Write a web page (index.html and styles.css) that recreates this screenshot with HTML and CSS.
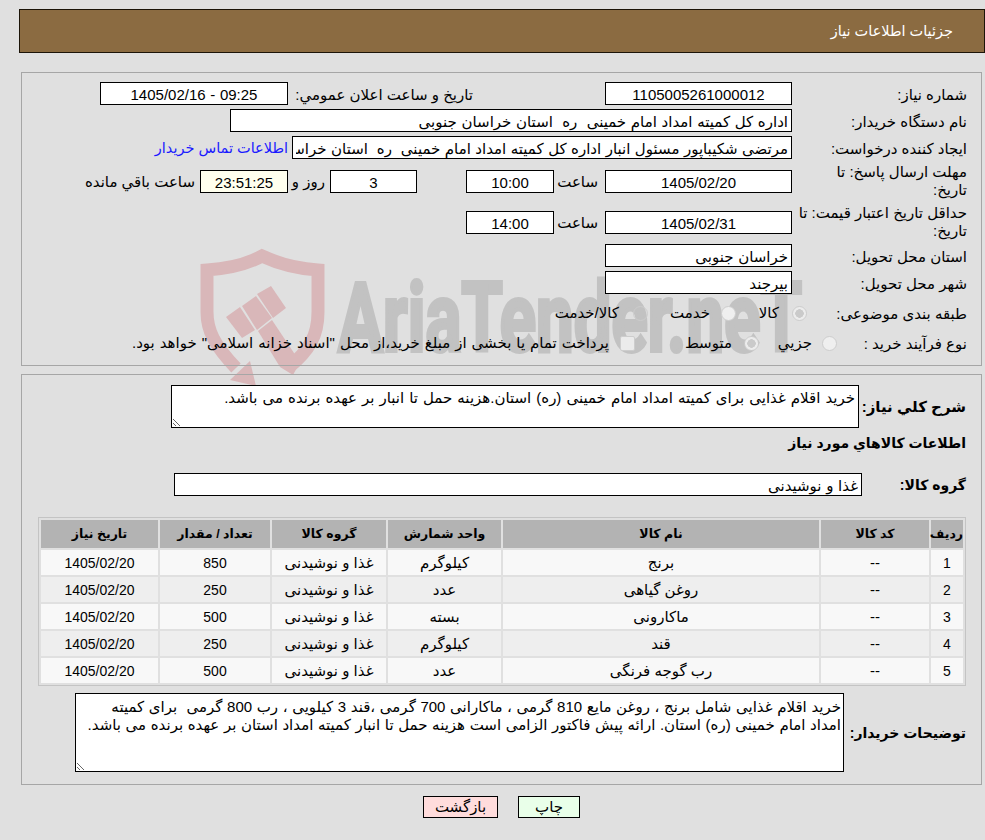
FILE: index.html
```html
<!DOCTYPE html>
<html lang="fa" dir="rtl">
<head>
<meta charset="utf-8">
<title>جزئیات اطلاعات نیاز</title>
<link rel="stylesheet" href="styles.css">
</head>
<body>
<svg class="watermark" viewBox="190 240 620 160" width="620" height="160">
  <path class="wm-shield" d="M236 368 C214 345 207 330 207 312 L207 270 Q240 268 262 256 Q288 268 318 270 L318 312 C318 335 310 350 288 368"/>
  <path class="wm-red" d="M250 361 L230 380 L256 386 Z"/>
  <path class="wm-red" d="M226 317 L240 307 L255 330 L242 338 Z"/>
  <path class="wm-red" d="M242 306 L256 296 L272 318 L257 330 Z"/>
  <path class="wm-red" d="M257 294 L271 286 L286 308 L273 318 Z"/>
  <path class="wm-red" d="M258 331 L272 320 L300 362 L293 375 L280 367 Z"/>
  <text class="wm-text" x="338" y="351" textLength="464" lengthAdjust="spacingAndGlyphs">AriaTender.neT</text>
</svg>

<header class="page-title">جزئیات اطلاعات نیاز</header>

<section class="panel panel-info">
  <div class="row">
    <label class="lbl">شماره نیاز:</label>
    <input class="field w-main ctr" readonly value="1105005261000012">
    <label class="lbl-announce">تاریخ و ساعت اعلان عمومي:</label>
    <input class="field w-date ctr" readonly value="1405/02/16 - 09:25" dir="ltr">
  </div>
  <div class="row">
    <label class="lbl">نام دستگاه خریدار:</label>
    <input class="field w-buyer" readonly value="اداره کل کمیته امداد امام خمینی  ره  استان خراسان جنوبی">
  </div>
  <div class="row">
    <label class="lbl">ایجاد کننده درخواست:</label>
    <input class="field w-creator" readonly value="مرتضی شکیباپور مسئول انبار اداره کل کمیته امداد امام خمینی  ره  استان خراسان جنوبی">
    <a class="contact" href="#">اطلاعات تماس خریدار</a>
  </div>
  <div class="row row-tall row-first-tall">
    <label class="lbl lbl-tall lbl-narrow">مهلت ارسال پاسخ: تا تاریخ:</label>
    <input class="field w-main ctr" readonly value="1405/02/20">
    <span class="unit">ساعت</span>
    <input class="field w-small ctr" readonly value="10:00">
    <input class="field w-days ctr" readonly value="3">
    <span class="days-and">روز و</span>
    <input class="field w-small ctr timer" readonly value="23:51:25">
    <span class="remain">ساعت باقي مانده</span>
  </div>
  <div class="row row-tall">
    <label class="lbl lbl-tall">حداقل تاریخ اعتبار قیمت: تا تاریخ:</label>
    <input class="field w-main ctr" readonly value="1405/02/31">
    <span class="unit">ساعت</span>
    <input class="field w-small ctr" readonly value="14:00">
  </div>
  <div class="row">
    <label class="lbl">استان محل تحویل:</label>
    <input class="field w-main" readonly value="خراسان جنوبی">
  </div>
  <div class="row">
    <label class="lbl">شهر محل تحویل:</label>
    <input class="field w-main" readonly value="بیرجند">
  </div>
  <div class="row row-options row-subject">
    <label class="lbl">طبقه بندی موضوعی:</label>
    <span class="radio checked opt-a"></span><span class="opt-text t-kala">کالا</span>
    <span class="radio pale"></span><span class="opt-text t-khedmat">خدمت</span>
    <span class="radio hollow"></span><span class="opt-text t-both">کالا/خدمت</span>
  </div>
  <div class="row row-options">
    <label class="lbl">نوع فرآیند خرید :</label>
    <span class="radio pale opt-b"></span><span class="opt-text t-jozei">جزیي</span>
    <span class="radio checked"></span><span class="opt-text t-motavaset">متوسط</span>
    <span class="check"></span><span class="opt-text t-long">پرداخت تمام یا بخشی از مبلغ خرید،از محل "اسناد خزانه اسلامی" خواهد بود.</span>
  </div>
</section>

<section class="panel panel-goods">
  <div class="row-need">
    <label class="lbl-bold need-l">شرح کلي نیاز:</label>
    <textarea class="area area-need" readonly>خرید اقلام غذایی برای کمیته امداد امام خمینی (ره) استان.هزینه حمل تا انبار بر عهده برنده می باشد.</textarea>
  </div>
  <h2 class="goods-title">اطلاعات کالاهاي مورد نیاز</h2>
  <div class="row-group">
    <label class="lbl-bold group-l">گروه کالا:</label>
    <input class="field w-group" readonly value="غذا و نوشیدنی">
  </div>
  <table class="goods">
    <colgroup>
      <col class="c1"><col class="c2"><col class="c3"><col class="c4"><col class="c5"><col class="c6"><col class="c7">
    </colgroup>
    <thead>
      <tr><th>ردیف</th><th>کد کالا</th><th>نام کالا</th><th>واحد شمارش</th><th>گروه کالا</th><th>تعداد / مقدار</th><th>تاریخ نیاز</th></tr>
    </thead>
    <tbody>
      <tr><td class="num">1</td><td>--</td><td>برنج</td><td>کیلوگرم</td><td>غذا و نوشیدنی</td><td class="num">850</td><td class="num">1405/02/20</td></tr>
      <tr><td class="num">2</td><td>--</td><td>روغن گیاهی</td><td>عدد</td><td>غذا و نوشیدنی</td><td class="num">250</td><td class="num">1405/02/20</td></tr>
      <tr><td class="num">3</td><td>--</td><td>ماکارونی</td><td>بسته</td><td>غذا و نوشیدنی</td><td class="num">500</td><td class="num">1405/02/20</td></tr>
      <tr><td class="num">4</td><td>--</td><td>قند</td><td>کیلوگرم</td><td>غذا و نوشیدنی</td><td class="num">250</td><td class="num">1405/02/20</td></tr>
      <tr><td class="num">5</td><td>--</td><td>رب گوجه فرنگی</td><td>عدد</td><td>غذا و نوشیدنی</td><td class="num">500</td><td class="num">1405/02/20</td></tr>
    </tbody>
  </table>
  <div class="row-notes">
    <label class="lbl-bold notes-l">توضیحات خریدار:</label>
    <textarea class="area area-notes" readonly>خرید اقلام غذایی شامل برنج ، روغن مایع 810 گرمی ، ماکارانی 700 گرمی ،قند 3 کیلویی ، رب 800 گرمی  برای کمیته
امداد امام خمینی (ره) استان. ارائه پیش فاکتور الزامی است هزینه حمل تا انبار کمیته امداد استان بر عهده برنده می باشد.</textarea>
  </div>
</section>

<div class="actions">
  <button class="btn btn-print" type="button">چاپ</button>
  <button class="btn btn-back" type="button">بازگشت</button>
</div>
</body>
</html>
```

FILE: styles.css
```css
* { box-sizing: border-box; }
html, body { height: 100%; }
body {
  margin: 0;
  padding: 9px 0 0;
  position: relative;
  overflow: hidden;
  background: #e0e0e0;
  color: #000;
  font: 15px/18px "Liberation Sans", "DejaVu Sans", sans-serif;
}
.watermark { position: absolute; left: 190px; top: 240px; }
.wm-shield { fill: none; stroke: #d9b7b9; stroke-width: 13; }
.wm-red { fill: #d9b7b9; }
.wm-text {
  fill: #c2c2c2;
  stroke: #c2c2c2;
  stroke-width: 4;
  font: 700 97px Roboto, sans-serif;
  direction: ltr;
  unicode-bidi: bidi-override;
}

.page-title {
  position: relative;
  width: 966px;
  height: 44px;
  margin-left: 19px;
  padding: 0 31px 0 0;
  margin-right: auto;
  background: #8b6b41;
  border: 1px solid #1c1408;
  color: #fff;
  font-size: 14.5px;
  line-height: 42px;
}
.panel {
  position: relative;
  width: 961px;
  margin-left: 21px;
  margin-right: auto;
  border: 1px solid #a6a6a6;
}
.panel-info {
  height: 294px;
  margin-top: 19px;
  padding: 9px 14px 0 0;
  display: flex;
  flex-direction: column;
  gap: 4px;
}
.panel-goods {
  height: 411px;
  margin-top: 8px;
  padding: 10px 15px 0 16px;
}
.row { display: flex; align-items: center; min-height: 23px; }
.row-tall { height: 36px; }
.row-first-tall { margin-bottom: 1px; }
.row-options { height: 26px; }
.row-subject { margin-top: 2px; }
.lbl { flex: none; width: 175px; padding-top: 2px; }
.lbl-tall { padding-top: 0; }
.lbl-narrow { padding-left: 7px; }
.field {
  flex: none;
  height: 23px;
  padding: 2px 3px 0;
  border: 1px solid #000;
  border-radius: 0;
  outline: 0;
  background: #fff;
  color: #000;
  font: inherit;
  word-spacing: .5px;
}
.ctr { text-align: center; }
.w-main { width: 187px; }
.w-date { width: 188px; margin-right: 5px; }
.w-buyer { width: 562px; }
.w-creator { width: 500px; word-spacing: .3px; }
.w-small { width: 88px; }
.w-days { width: 87px; margin-right: 49px; }
.w-group { width: 688px; }
.lbl-announce { flex: none; width: 180px; margin-right: 132px; padding-top: 2px; }
.contact { margin-right: 4px; color: #1a1aff; font-size: 14.5px; text-decoration: none; white-space: nowrap; }
.unit { flex: none; width: 40px; margin-right: 7px; padding-top: 2px; }
.unit + .w-small { margin-right: 4px; }
.days-and { flex: none; width: 37px; margin-right: 5px; padding-top: 2px; }
.timer { background: #ffffee; }
.remain { margin-right: 5px; padding-top: 2px; white-space: nowrap; }

.radio, .check {
  flex: none;
  display: block;
  width: 15px;
  height: 15px;
  border: 1px solid #cdcdcd;
  border-radius: 50%;
  background: #e9e9e9;
}
.radio.checked { background: radial-gradient(circle, #cacaca 0 4px, #ececec 4.5px); }
.radio.hollow { background: transparent; }
.radio.pale { background: #efefef; }
.check { border-radius: 2px; background: #ebebeb; }
.opt-a { margin-right: -15px; }
.opt-b { margin-right: -45px; }
.opt-text { flex: none; white-space: nowrap; }
.t-kala { width: 43px; margin-right: 13px; }
.t-khedmat { width: 62px; margin-right: 11px; }
.t-both { margin-right: 14px; }
.t-jozei { width: 53px; margin-right: 10px; }
.t-motavaset { width: 97px; margin-right: 12px; }
.t-long { margin-right: 11px; word-spacing: .8px; }

.lbl-bold { flex: none; font-weight: 700; white-space: nowrap; }
.row-need { display: flex; align-items: center; }
.need-l { width: 107px; }
.area {
  display: block;
  flex: none;
  padding: 3px 3px 0;
  border: 1px solid #000;
  border-radius: 0;
  outline: 0;
  background: #fff;
  color: #000;
  font: inherit;
  word-spacing: .85px;
  resize: both;
}
.area-need { width: 688px; height: 43px; }
.area-notes { width: 769px; height: 79px; padding: 4px 2px 0 0; word-spacing: .45px; }
.goods-title { margin: 6px 0 0; height: 18px; font-size: 14px; line-height: 18px; font-weight: 700; }
.row-group { display: flex; align-items: center; margin-top: 21px; }
.group-l { width: 104px; font-size: 14px; }
.goods {
  width: 928px;
  margin-top: 21px;
  table-layout: fixed;
  border-collapse: separate;
  border-spacing: 2px;
  border: 1px solid #c4c4c4;
}
.c1 { width: 32px; } .c2 { width: 108px; } .c3 { width: 316px; } .c4 { width: 113px; }
.c5 { width: 114px; } .c6 { width: 110px; } .c7 { width: 117px; }
.goods th { height: 28px; padding: 0; background: #b3b3b3; font-size: 12.5px; font-weight: 700; text-align: center; }
.goods td { height: 25px; padding: 0; text-align: center; background: #f8f8f8; }
.goods td.num { font-size: 14px; }
.goods tbody tr:nth-child(even) td { background: #eeeeee; }
.row-notes { display: flex; align-items: center; margin-top: 7px; }
.notes-l { width: 122px; font-size: 14px; }

.actions {
  position: relative;
  width: 961px;
  margin: 11px auto 0 21px;
  display: flex;
  justify-content: center;
  gap: 20px;
}
.btn {
  height: 22px;
  padding: 0;
  border: 1px solid #000;
  border-radius: 0;
  color: #000;
  font: inherit;
}
.btn-print { width: 62px; background: #e9ffe9; }
.btn-back { width: 75px; background: #ffdcdc; }
```
